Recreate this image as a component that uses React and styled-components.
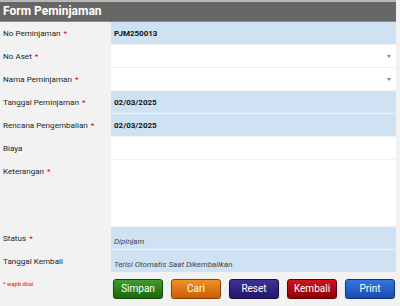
import styled, { createGlobalStyle } from 'styled-components'

const Global = createGlobalStyle`
    html, body {
        margin: 0;
        padding: 0;
        background: #f2f2f2;
        font-family: Roboto, "Noto Sans", sans-serif;
    }
`
const Page = styled.div`
    width: 396px;
`
const Header = styled.div`
    height: 19px;
    border-top: 2px solid #b8b8b8;
    border-bottom: 1px solid #8a8a8a;
    background: #666;
    color: #fff;
    font-weight: bold;
    font-size: 12px;
    line-height: 19px;
    padding-left: 3px;
`
const Form = styled.div`
    display: grid;
    grid-template-columns: 111px 285px;
    row-gap: 1px;
`
const Row = styled.div`
    display: contents;
`
const Label = styled.div`
    height: ${p => p.$h || 22}px;
    display: flex;
    align-items: ${p => (p.$top ? 'flex-start' : 'center')};
    padding-top: ${p => (p.$top ? 6 : 0)}px;
    padding-left: 3px;
    font-size: 8.1px;
    white-space: nowrap;
    color: #1e1e1e;
    box-sizing: border-box;
`
const Req = styled.span`
    color: #e00000;
    margin-left: 3px;
`
const Field = styled.div`
    height: ${p => p.$h || 22}px;
    background: ${p => (p.$ro ? '#cfe2f3' : '#fff')};
    display: flex;
    align-items: ${p => (p.$low ? 'flex-end' : 'center')};
    justify-content: space-between;
    padding: 0 5px ${p => (p.$low ? 3 : 0)}px 3px;
    box-sizing: border-box;
    font-size: 8px;
    font-weight: ${p => (p.$bold ? 'bold' : 'normal')};
    font-style: ${p => (p.$italic ? 'italic' : 'normal')};
    color: ${p => (p.$italic ? '#444' : '#111')};
`
const Footer = styled.div`
    display: grid;
    grid-template-columns: 113px 1fr;
    margin-top: 7px;
`
const Note = styled.div`
    color: #e00000;
    font-size: 6px;
    padding-left: 3px;
    padding-top: 1px;
`
const Buttons = styled.div`
    display: flex;
    gap: 8px;
`
const Button = styled.button`
    width: 50px;
    height: 20px;
    padding: 0;
    border-radius: 3px;
    border: 1px solid ${p => p.$dark};
    background: linear-gradient(${p => p.$top}, ${p => p.$bottom});
    color: #fff;
    font-family: Roboto, "Noto Sans", sans-serif;
    font-size: 10px;
    line-height: 18px;
    box-shadow: 0 1px 1px rgba(0,0,0,0.3);
`
const Caret = () => (
    <svg width="4" height="3" viewBox="0 0 4 3">
        <path d="M0 0 L4 0 L2 3 Z" fill="#888" />
    </svg>
)

const rows = [
    { label: 'No Peminjaman', req: true, value: 'PJM250013', ro: true, bold: true },
    { label: 'No Aset', req: true, select: true },
    { label: 'Nama Peminjaman', req: true, select: true },
    { label: 'Tanggal Peminjaman', req: true, value: '02/03/2025', ro: true, bold: true },
    { label: 'Rencana Pengembalian', req: true, value: '02/03/2025', ro: true, bold: true },
    { label: 'Biaya' },
    { label: 'Keterangan', req: true, h: 66, top: true },
    { label: 'Status', req: true, value: 'Dipinjam', ro: true, italic: true },
    { label: 'Tanggal Kembali', value: 'Terisi Otomatis Saat Dikembalikan', ro: true, italic: true },
]

const buttons = [
    { text: 'Simpan', top: '#3f9e2c', bottom: '#1c6410', dark: '#124a08' },
    { text: 'Cari', top: '#f29124', bottom: '#c75d08', dark: '#8a4005' },
    { text: 'Reset', top: '#3d3296', bottom: '#221868', dark: '#150f45' },
    { text: 'Kembali', top: '#d0141c', bottom: '#8c0006', dark: '#5e0004' },
    { text: 'Print', top: '#3276dc', bottom: '#1a4cb2', dark: '#10337a' },
]

const App = () => {
    return (
        <Page>
            <Global />
            <Header>Form Peminjaman</Header>
            <Form>
                {rows.map(r => (
                    <Row key={r.label}>
                        <Label $h={r.h} $top={r.top}>
                            {r.label}{r.req && <Req>*</Req>}
                        </Label>
                        <Field $h={r.h} $ro={r.ro} $bold={r.bold} $italic={r.italic} $low={r.italic}>
                            <span>{r.value}</span>
                            {r.select && <Caret />}
                        </Field>
                    </Row>
                ))}
            </Form>
            <Footer>
                <Note>* wajib diisi</Note>
                <Buttons>
                    {buttons.map(b => (
                        <Button key={b.text} $top={b.top} $bottom={b.bottom} $dark={b.dark}>{b.text}</Button>
                    ))}
                </Buttons>
            </Footer>
        </Page>
    )
}

export default App
